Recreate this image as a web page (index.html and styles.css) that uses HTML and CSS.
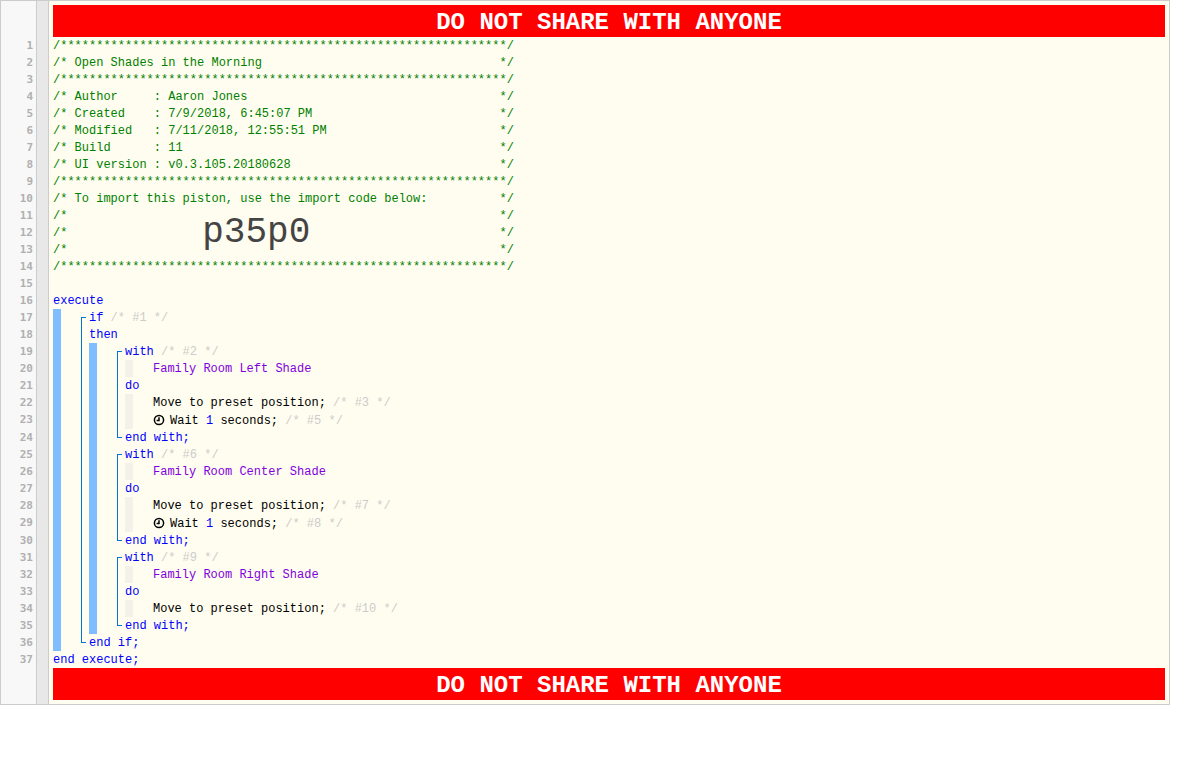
FILE: index.html
```html
<!DOCTYPE html>
<html lang="en">
<head>
<meta charset="utf-8">
<title>Open Shades in the Morning</title>
<link rel="stylesheet" href="styles.css">
</head>
<body>
<div class="editor">
  <div class="gutter">
    <div class="num">1</div><div class="num">2</div><div class="num">3</div><div class="num">4</div><div class="num">5</div><div class="num">6</div><div class="num">7</div><div class="num">8</div><div class="num">9</div><div class="num">10</div><div class="num">11</div><div class="num">12</div><div class="num">13</div><div class="num">14</div><div class="num">15</div><div class="num">16</div><div class="num">17</div><div class="num">18</div><div class="num">19</div><div class="num">20</div><div class="num">21</div><div class="num">22</div><div class="num tall">23</div><div class="num">24</div><div class="num">25</div><div class="num">26</div><div class="num">27</div><div class="num">28</div><div class="num tall">29</div><div class="num">30</div><div class="num">31</div><div class="num">32</div><div class="num">33</div><div class="num">34</div><div class="num">35</div><div class="num">36</div><div class="num">37</div>
  </div>
  <div class="fold"></div>
  <div class="code">
    <div class="banner">DO NOT SHARE WITH ANYONE</div>
    <div class="header">
<div class="line">/**************************************************************/</div>
<div class="line">/* Open Shades in the Morning                                 */</div>
<div class="line">/**************************************************************/</div>
<div class="line">/* Author     : Aaron Jones                                   */</div>
<div class="line">/* Created    : 7/9/2018, 6:45:07 PM                          */</div>
<div class="line">/* Modified   : 7/11/2018, 12:55:51 PM                        */</div>
<div class="line">/* Build      : 11                                            */</div>
<div class="line">/* UI version : v0.3.105.20180628                             */</div>
<div class="line">/**************************************************************/</div>
<div class="line">/* To import this piston, use the import code below:          */</div>
<div class="line split"><span>/*</span><span>*/</span></div>
<div class="line">/*                   <span class="import-code">p35p0</span>                          */</div>
<div class="line split"><span>/*</span><span>*/</span></div>
<div class="line">/**************************************************************/</div>
    </div>
    <div class="line"></div>
    <div class="line kw">execute</div>
    <div class="block">
      <div class="bar"></div>
      <div class="bracket">
        <div class="line"><span class="kw">if</span> <span class="note">/* #1 */</span></div>
        <div class="line kw">then</div>
        <div class="block">
          <div class="bar"></div>
          <div class="stack">
            <div class="bracket">
              <div class="line"><span class="kw">with</span> <span class="note">/* #2 */</span></div>
              <div class="sub"><div class="tan"></div><div class="sub-body"><div class="line device">Family Room Left Shade</div></div></div>
              <div class="line kw">do</div>
              <div class="sub"><div class="tan"></div><div class="sub-body">
                <div class="line">Move to preset position; <span class="note">/* #3 */</span></div>
                <div class="line tall"><svg class="clock" viewBox="0 0 12 12"><circle cx="6" cy="6" r="4.6"/><path d="M6 3.2V6.4H3.6"/></svg>Wait <span class="kw">1</span> seconds; <span class="note">/* #5 */</span></div>
              </div></div>
              <div class="line kw">end with;</div>
            </div>
            <div class="bracket">
              <div class="line"><span class="kw">with</span> <span class="note">/* #6 */</span></div>
              <div class="sub"><div class="tan"></div><div class="sub-body"><div class="line device">Family Room Center Shade</div></div></div>
              <div class="line kw">do</div>
              <div class="sub"><div class="tan"></div><div class="sub-body">
                <div class="line">Move to preset position; <span class="note">/* #7 */</span></div>
                <div class="line tall"><svg class="clock" viewBox="0 0 12 12"><circle cx="6" cy="6" r="4.6"/><path d="M6 3.2V6.4H3.6"/></svg>Wait <span class="kw">1</span> seconds; <span class="note">/* #8 */</span></div>
              </div></div>
              <div class="line kw">end with;</div>
            </div>
            <div class="bracket">
              <div class="line"><span class="kw">with</span> <span class="note">/* #9 */</span></div>
              <div class="sub"><div class="tan"></div><div class="sub-body"><div class="line device">Family Room Right Shade</div></div></div>
              <div class="line kw">do</div>
              <div class="sub"><div class="tan"></div><div class="sub-body">
                <div class="line">Move to preset position; <span class="note">/* #10 */</span></div>
              </div></div>
              <div class="line kw">end with;</div>
            </div>
          </div>
        </div>
        <div class="line kw">end if;</div>
      </div>
    </div>
    <div class="line kw">end execute;</div>
    <div class="banner">DO NOT SHARE WITH ANYONE</div>
  </div>
</div>
</body>
</html>
```

FILE: styles.css
```css
* {
  box-sizing: border-box;
}

html,
body {
  margin: 0;
  background: #fff;
}

.editor {
  display: flex;
  width: 1170px;
  height: 705px;
  border: 1px solid #ccc;
}

.gutter {
  flex: none;
  width: 36px;
  padding: 36px 3px 0 0;
  background: #f8f8f8;
  border-right: 1px solid #ccc;
  color: #b0b0b0;
  font: bold 11px/17px "DejaVu Sans Mono", monospace;
  text-align: right;
}

.num {
  height: 17px;
}

.num.tall {
  height: 18px;
  line-height: 18px;
}

.fold {
  flex: none;
  width: 12px;
  background: #e8e8e8;
  border-right: 1px solid #ccc;
}

.code {
  flex: 1;
  min-width: 0;
  padding: 4px;
  background: #fffdef;
  color: #000;
  font: 12px/17px "Liberation Mono", monospace;
}

.banner {
  height: 32px;
  background: #f00;
  color: #fff;
  font: bold 24px/36px "Liberation Mono", monospace;
  text-align: center;
}

.line {
  height: 17px;
  line-height: 19px;
  white-space: pre;
}

.line.tall {
  height: 18px;
  line-height: 21px;
}

.line.split {
  display: flex;
  justify-content: space-between;
  width: 64ch;
}

.header {
  color: #008000;
}

.import-code {
  margin: 0 2px 0 -2px;
  color: #444;
  font-size: 36px;
  line-height: 0;
  vertical-align: -6px;
}

.kw {
  color: #00f;
}

.note {
  color: #ccc;
}

.device {
  color: #7f00e0;
}

.block {
  display: flex;
}

.bar {
  flex: none;
  width: 8px;
  background: #80bdff;
}

.stack {
  flex: 1;
  min-width: 0;
  margin-left: 20px;
}

.block > .bracket {
  flex: 1;
  min-width: 0;
  margin-left: 20px;
}

.bracket {
  position: relative;
  padding-left: 8px;
}

.bracket::before {
  content: "";
  position: absolute;
  top: 8px;
  bottom: 8px;
  left: 0;
  width: 4px;
  border: solid #0077cc;
  border-width: 1px 0 1px 1px;
}

.sub {
  display: flex;
}

.tan {
  flex: none;
  width: 8px;
  background: #f3f1ea;
}

.sub-body {
  flex: 1;
  min-width: 0;
  padding-left: 20px;
}

.clock {
  width: 12px;
  height: 12px;
  margin-right: 5px;
  vertical-align: -2px;
  fill: none;
  stroke: #000;
  stroke-width: 1.5;
}
```
